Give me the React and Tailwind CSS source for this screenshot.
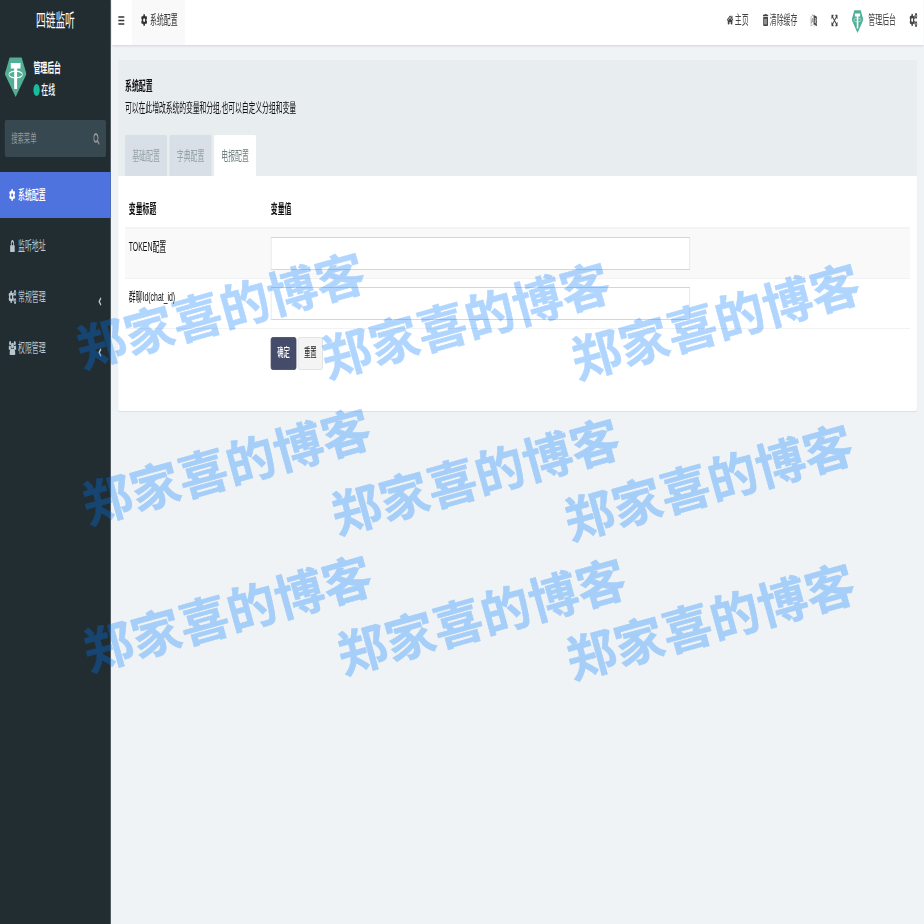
import React, { useState } from 'react';
import { FaBars, FaCog, FaHome, FaTrashAlt, FaExpandArrowsAlt, FaCogs, FaLock, FaSearch, FaAngleLeft } from 'react-icons/fa';

const GroupIcon = ({ className }) => (
  <svg viewBox="0 0 17 15" preserveAspectRatio="none" fill="currentColor" className={className}>
    <circle cx="3.6" cy="2.3" r="2.2" />
    <circle cx="13.4" cy="2.3" r="2.2" />
    <circle cx="8.5" cy="5" r="3" />
    <path d="M0.3 9.4V6.4Q0.6 4.8 2 4.9Q3.6 5.8 5 5.2Q5 7.4 5.6 9.4Z" />
    <path d="M16.7 9.4V6.4Q16.4 4.8 15 4.9Q13.4 5.8 12 5.2Q12 7.4 11.4 9.4Z" />
    <path d="M5.4 8Q8.5 9.4 11.6 8Q14.6 9 14.6 13Q14.6 15 12.6 15H4.4Q2.4 15 2.4 13Q2.4 9 5.4 8Z" />
  </svg>
);

const LanguageIcon = ({ className }) => (
  <svg viewBox="0 0 14 14" preserveAspectRatio="none" className={className}>
    <path d="M0.8 3L7 1V11L0.8 13Z" fill="#fff" stroke="#999" strokeWidth="0.9" />
    <path d="M2.2 10L4 4.5L5.8 9M2.8 8.2L5.2 7.6" fill="none" stroke="#777" strokeWidth="0.9" />
    <path d="M7 1L13.2 3V13.2L7 11Z" fill="#444" />
    <path d="M8.4 5L12 6M10.2 4.2V5.6M11.4 6Q10.6 9 8.6 9.6M9 6.6Q10.2 9.4 12 10.4" fill="none" stroke="#fff" strokeWidth="0.8" />
    <path d="M3 0.6L6 1.2M7 13.4L10 12.6" fill="none" stroke="#999" strokeWidth="0.8" />
  </svg>
);

const menus = [
  { title: '系统配置', icon: FaCog, active: true },
  { title: '监听地址', icon: FaLock, small: true },
  { title: '常规管理', icon: FaCogs, children: true },
  { title: '权限管理', icon: GroupIcon, children: true },
];

const tabs = ['基础配置', '字典配置', '电报配置'];

const marks = [
  { x: 220, y: 308 }, { x: 465, y: 318 }, { x: 715, y: 319 },
  { x: 226, y: 464 }, { x: 475, y: 473.5 }, { x: 707.5, y: 480 },
  { x: 227, y: 611 }, { x: 480.5, y: 613.5 }, { x: 710, y: 619 },
];

const Logo = ({ className }) => (
  <svg viewBox="0 0 40 40" preserveAspectRatio="none" className={className}>
    <path d="M9 0.5H31L40 17L20 40L0 17Z" fill="#50af95" />
    <path d="M11 6H29V11.5H22.7V32H17.3V11.5H11Z" fill="#fff" />
    <ellipse cx="20" cy="17.5" rx="12.5" ry="3.4" fill="none" stroke="#fff" strokeWidth="1.1" />
  </svg>
);

const Sidebar = () => (
  <aside className="w-[209px] h-full shrink-0 bg-[#222d32] text-white">
    <div className="h-[45px] pb-[4px] flex items-center justify-center text-[18.4px]">四链监听</div>
    <div className="h-[75px] flex pl-[9px] pt-[12px]">
      <Logo className="w-[41px] h-[40px] shrink-0" />
      <div className="ml-[13px]">
        <p className="h-[21px] leading-[21px] font-bold">管理后台</p>
        <p className="h-[24px] leading-[24px] flex items-center font-medium">
          <span className="w-[12px] h-[12px] rounded-full bg-[#18bc9c] mr-[3px]" />
          在线
        </p>
      </div>
    </div>
    <div className="mx-[9px] h-[37px] px-[12px] rounded-[3px] bg-[#374850] flex items-center justify-between text-[12px] text-[#999]">
      <span>搜索菜单</span>
      <FaSearch className="w-[12px] h-[12px]" />
    </div>
    <ul className="mt-[15px] flex flex-col gap-[5px]">
      {menus.map((m) => (
        <li key={m.title} className={m.active ? 'h-[46px] flex items-center pl-[15px] pr-[16px] bg-[#4e73df] text-white font-medium' : 'h-[46px] flex items-center pl-[15px] pr-[16px] text-[#b8c7ce]'}>
          <span className="w-[16px] mr-[3px] flex justify-center">
            <m.icon preserveAspectRatio="none" className={m.small ? 'w-[9px] h-[12px]' : m.active ? 'w-[12px] h-[12px]' : 'w-[15px] h-[14px]'} />
          </span>
          <span>{m.title}</span>
          {m.children && <FaAngleLeft className="ml-auto mt-[9px] w-[9px] h-[13px]" />}
        </li>
      ))}
    </ul>
  </aside>
);

const Header = () => (
  <header className="h-[45px] shrink-0 bg-white shadow-[0_1px_3px_rgba(0,21,41,0.14)] flex items-center text-[#333] ml-[2px]">
    <FaBars preserveAspectRatio="none" className="ml-[12px] w-[12px] h-[11px] mt-[-5px]" />
    <div className="ml-[14px] w-[100px] h-full pb-[5px] bg-[#f9f9f9] flex items-center pl-[17px]">
      <FaCog className="w-[12px] h-[12px] mr-[5px]" />
      系统配置
    </div>
    <div className="ml-auto w-[372px] h-full pb-[5px] flex items-center text-[#444] whitespace-nowrap">
      <FaHome preserveAspectRatio="none" className="w-[13px] h-[10px] shrink-0" />
      <span className="ml-[2px]">主页</span>
      <FaTrashAlt className="ml-[27px] w-[11px] h-[12px] shrink-0" />
      <span className="ml-[2px]">清除缓存</span>
      <LanguageIcon className="ml-[25px] w-[13px] h-[13px] shrink-0" />
      <FaExpandArrowsAlt className="ml-[26px] w-[13px] h-[13px] shrink-0" />
      <Logo className="ml-[26px] w-[22px] h-[23px] mt-[3px] shrink-0" />
      <span className="ml-[9px]">管理后台</span>
      <FaCogs preserveAspectRatio="none" className="ml-[26px] w-[15px] h-[14px] shrink-0" />
    </div>
  </header>
);

const ConfigPanel = () => {
  const [active, setActive] = useState(2);
  const [token, setToken] = useState('');
  const [chatId, setChatId] = useState('');

  return (
    <div className="mt-[15px] ml-[14px] mr-[13px] h-[351px] rounded-[3px] bg-white shadow-[0_1px_1px_rgba(0,0,0,0.08)] text-[#111]">
      <div className="h-[116px] bg-[#e8edf0] px-[13px] pt-[15px] flex flex-col">
        <p className="h-[22px] leading-[22px] font-bold">系统配置</p>
        <p className="h-[22px] leading-[22px] tracking-[-0.24px]">可以在此增改系统的变量和分组,也可以自定义分组和变量</p>
        <div className="mt-auto flex gap-[5px]">
          {tabs.map((t, i) => (
            <button
              key={t}
              onClick={() => setActive(i)}
              className={i === active ? 'w-[79px] h-[41px] rounded-t-[2px] bg-white text-[#6f7f80]' : 'w-[79px] h-[41px] rounded-t-[2px] bg-[#d8dfe6] text-[#95a3a5]'}
            >
              {t}
            </button>
          ))}
        </div>
      </div>

      <div className="ml-[13px] mr-[13px]">
        <div className="h-[53px] pt-[15px] border-b-2 border-[#f4f4f4] flex font-bold">
          <span className="w-[275px] pl-[7px] leading-[36px]">变量标题</span>
          <span className="leading-[36px]">变量值</span>
        </div>
        <div className="h-[50px] border-b border-[#f2f2f2] bg-[#f9f9f9] flex">
          <span className="w-[275px] pl-[7px] pt-[8px]">TOKEN配置</span>
          <input value={token} onChange={(e) => setToken(e.target.value)} className="mt-[8px] w-[791px] h-[33px] bg-white border border-[#d2d6de] px-3 outline-none" />
        </div>
        <div className="h-[50px] border-b border-[#f2f2f2] flex">
          <span className="w-[275px] pl-[7px] pt-[8px]">群聊Id(chat_id)</span>
          <input value={chatId} onChange={(e) => setChatId(e.target.value)} className="mt-[8px] w-[791px] h-[33px] bg-white border border-[#d2d6de] px-3 outline-none" />
        </div>
        <div className="mt-[8px] ml-[275px] flex gap-[3px] text-[12px]">
          <button className="w-[48px] h-[33px] pb-[2px] rounded-[3px] border border-[#3b425c] bg-[#444c69] text-white font-medium">确定</button>
          <button className="w-[47px] h-[33px] pb-[2px] rounded-[3px] border border-[#ddd] bg-[#f4f4f4] text-[#222]">重置</button>
        </div>
      </div>
    </div>
  );
};

const App = () => {
  return (
    <div className="relative w-[924px] h-[924px] overflow-hidden bg-[#eff3f6]">
      {/* wide desktop layout condensed to the window width */}
      <div
        className="w-[1743.4px] h-[924px] origin-top-left scale-x-[0.53] flex text-[13px] leading-[20px]"
        style={{ fontFamily: '"Liberation Sans", "Noto Sans CJK SC", sans-serif' }}
      >
        <Sidebar />
        <main className="flex-1 min-w-0 flex flex-col">
          <Header />
          <ConfigPanel />
        </main>
      </div>

      <div
        className="absolute inset-0 pointer-events-none opacity-[0.31] font-bold text-[49.5px] leading-none text-[#007bff]"
        style={{ fontFamily: '"Noto Sans CJK SC", sans-serif' }}
      >
        {marks.map((m, i) => (
          <span
            key={i}
            className="absolute whitespace-nowrap -translate-x-1/2 -translate-y-1/2 -rotate-[15.5deg] [-webkit-text-stroke:0.5px_#007bff]"
            style={{ left: m.x, top: m.y }}
          >
            郑家喜的博客
          </span>
        ))}
      </div>
    </div>
  );
};

export default App;
